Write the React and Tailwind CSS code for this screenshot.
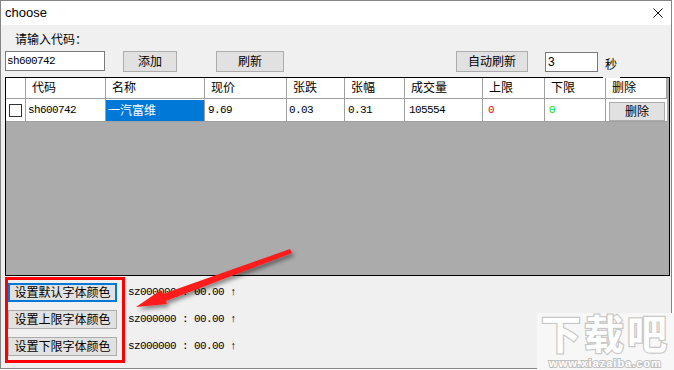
import React from 'react';

const sans = "[font-family:'Liberation_Sans','Noto_Sans_CJK_SC',sans-serif]";
const mono = "[font-family:'Liberation_Mono','DejaVu_Sans_Mono',monospace]";
const cols = "grid grid-cols-[20px_80px_99px_82px_58px_60px_78px_62px_61px_61px] w-[661px]";

const headers = ['', '代码', '名称', '现价', '张跌', '张幅', '成交量', '上限', '下限', '删除'];

const Btn = ({ className = '', children }) => (
  <div className={`flex items-center justify-center bg-[#e1e1e1] border border-[#adadad] text-[12px] text-black ${className}`}>
    {children}
  </div>
);

const Cell = ({ className = '', children }) => (
  <div className={`flex items-center border-r border-[#a0a0a0] overflow-hidden whitespace-nowrap ${className}`}>{children}</div>
);

const Arrow = () => (
  <svg className="absolute left-0 top-0 pointer-events-none" width="674" height="370">
    <defs>
      <filter id="sh" x="-20%" y="-50%" width="140%" height="200%">
        <feDropShadow dx="2" dy="3" stdDeviation="2" floodColor="#000" floodOpacity="0.45" />
      </filter>
    </defs>
    <g filter="url(#sh)" fill="#ff1a1a">
      <polygon points="290,249 292,253 163,302 160,295" />
      <polygon points="136,307 161,290 167,304" />
    </g>
  </svg>
);

const Watermark = () => (
  <div className="absolute left-[537px] top-[313px] w-[137px] h-[57px] bg-[#f7f7f7] flex flex-col items-center overflow-hidden pointer-events-none">
    <div className={`${sans} h-[44px] text-[40px] leading-[44px] font-bold text-white tracking-[3px] [paint-order:stroke_fill] [-webkit-text-stroke:2.5px_#c8c8c8]`}>下载吧</div>
    <div className={`${sans} h-[13px] text-[11px] leading-[13px] font-bold text-white tracking-[1px] [paint-order:stroke_fill] [-webkit-text-stroke:2px_#c0c0c0]`}>www.xiazaiba.com</div>
  </div>
);

export default function App() {
  return (
    <div className={`w-[674px] h-[370px] bg-white relative overflow-hidden ${sans}`}>
      <div className="w-[672px] h-[369px] border border-[#858585] flex flex-col">
        <div className="h-[24px] bg-white flex items-center pl-[4px] shrink-0">
          <span className="text-[13px] text-black">choose</span>
          <svg className="ml-auto mr-[8px]" width="10" height="10" viewBox="0 0 10 10">
            <path d="M0.5 0.5 L9.5 9.5 M9.5 0.5 L0.5 9.5" stroke="#111" strokeWidth="1" />
          </svg>
        </div>

        <div className="flex-1 bg-[#f0f0f0] pl-[4px]">
          <div className="ml-[10px] mt-[7px] h-[16px] leading-[16px] text-[12px] text-black">请输入代码：</div>

          <div className="mt-[3px] h-[21px] flex items-start">
            <div className={`w-[100px] h-[20px] border border-[#7a7a7a] bg-white pl-[1px] flex items-center text-[11px] tracking-[-0.6px] ${mono}`}>sh600742</div>
            <Btn className="ml-[18px] w-[54px] h-[21px]">添加</Btn>
            <Btn className="ml-[39px] w-[68px] h-[21px]">刷新</Btn>
            <Btn className="ml-[172px] w-[72px] h-[21px]">自动刷新</Btn>
            <div className="ml-[17px] mt-[1px] w-[53px] h-[20px] border border-[#7a7a7a] bg-white pl-[2px] flex items-center text-[12px]">3</div>
            <div className="ml-[5px] w-[17px] h-[27px] relative z-10 bg-[#f0f0f0] pt-[6px] pl-[2px] text-[12px] leading-[16px]">秒</div>
          </div>

          <div className="mt-[5px] w-[665px] h-[199px] border border-black bg-[#ababab]">
            <div className={`${cols} h-[21px] bg-white border-b border-[#a0a0a0]`}>
              {headers.map((h, i) => (
                <Cell key={i} className="pl-[6px] text-[12px] text-black">{h}</Cell>
              ))}
            </div>
            <div className={`${cols} h-[23px] bg-white border-b border-[#a0a0a0]`}>
              <Cell className="pl-[3px]">
                <div className="w-[13px] h-[13px] border border-[#333] bg-white" />
              </Cell>
              <Cell className={`pl-[2px] text-[11px] tracking-[-0.6px] ${mono}`}>sh600742</Cell>
              <Cell className="bg-[#0078d7] text-white text-[12px] pl-[2px] border-t border-t-white">一汽富维</Cell>
              <Cell className={`pl-[3px] text-[11px] tracking-[-0.6px] ${mono}`}>9.69</Cell>
              <Cell className={`pl-[2px] text-[11px] tracking-[-0.6px] ${mono}`}>0.03</Cell>
              <Cell className={`pl-[3px] text-[11px] tracking-[-0.6px] ${mono}`}>0.31</Cell>
              <Cell className={`pl-[4px] text-[11px] tracking-[-0.6px] ${mono}`}>105554</Cell>
              <Cell className={`pl-[5px] text-[11px] text-[#ff0000] ${mono}`}>0</Cell>
              <Cell className={`pl-[4px] text-[11px] text-[#00e000] ${mono}`}>0</Cell>
              <div className="pl-[3px] pt-[3px]">
                <Btn className="w-[56px] h-[19px]">删除</Btn>
              </div>
            </div>
          </div>

          <div className="mt-[1px] flex items-start">
            <div className="w-[120px] border-[3px] border-[#ff0000] pt-[3px] pb-[4px] flex flex-col gap-[8px]">
              <div className="w-[109px] h-[19px] flex items-center justify-center bg-[#e1e1e1] border-2 border-[#0078d7] text-[12px]">设置默认字体颜色</div>
              <Btn className="w-[109px] h-[19px]">设置上限字体颜色</Btn>
              <Btn className="w-[109px] h-[19px]">设置下限字体颜色</Btn>
            </div>
            <div className={`ml-[3px] pt-[6px] flex flex-col gap-[8px] text-[11px] tracking-[-0.6px] whitespace-pre ${mono}`}>
              <div className="h-[19px] leading-[19px]">sz000000 : 00.00 ↑</div>
              <div className="h-[19px] leading-[19px]">sz000000 : 00.00 ↑</div>
              <div className="h-[19px] leading-[19px]">sz000000 : 00.00 ↑</div>
            </div>
          </div>
        </div>
      </div>
      <Arrow />
      <Watermark />
    </div>
  );
}
